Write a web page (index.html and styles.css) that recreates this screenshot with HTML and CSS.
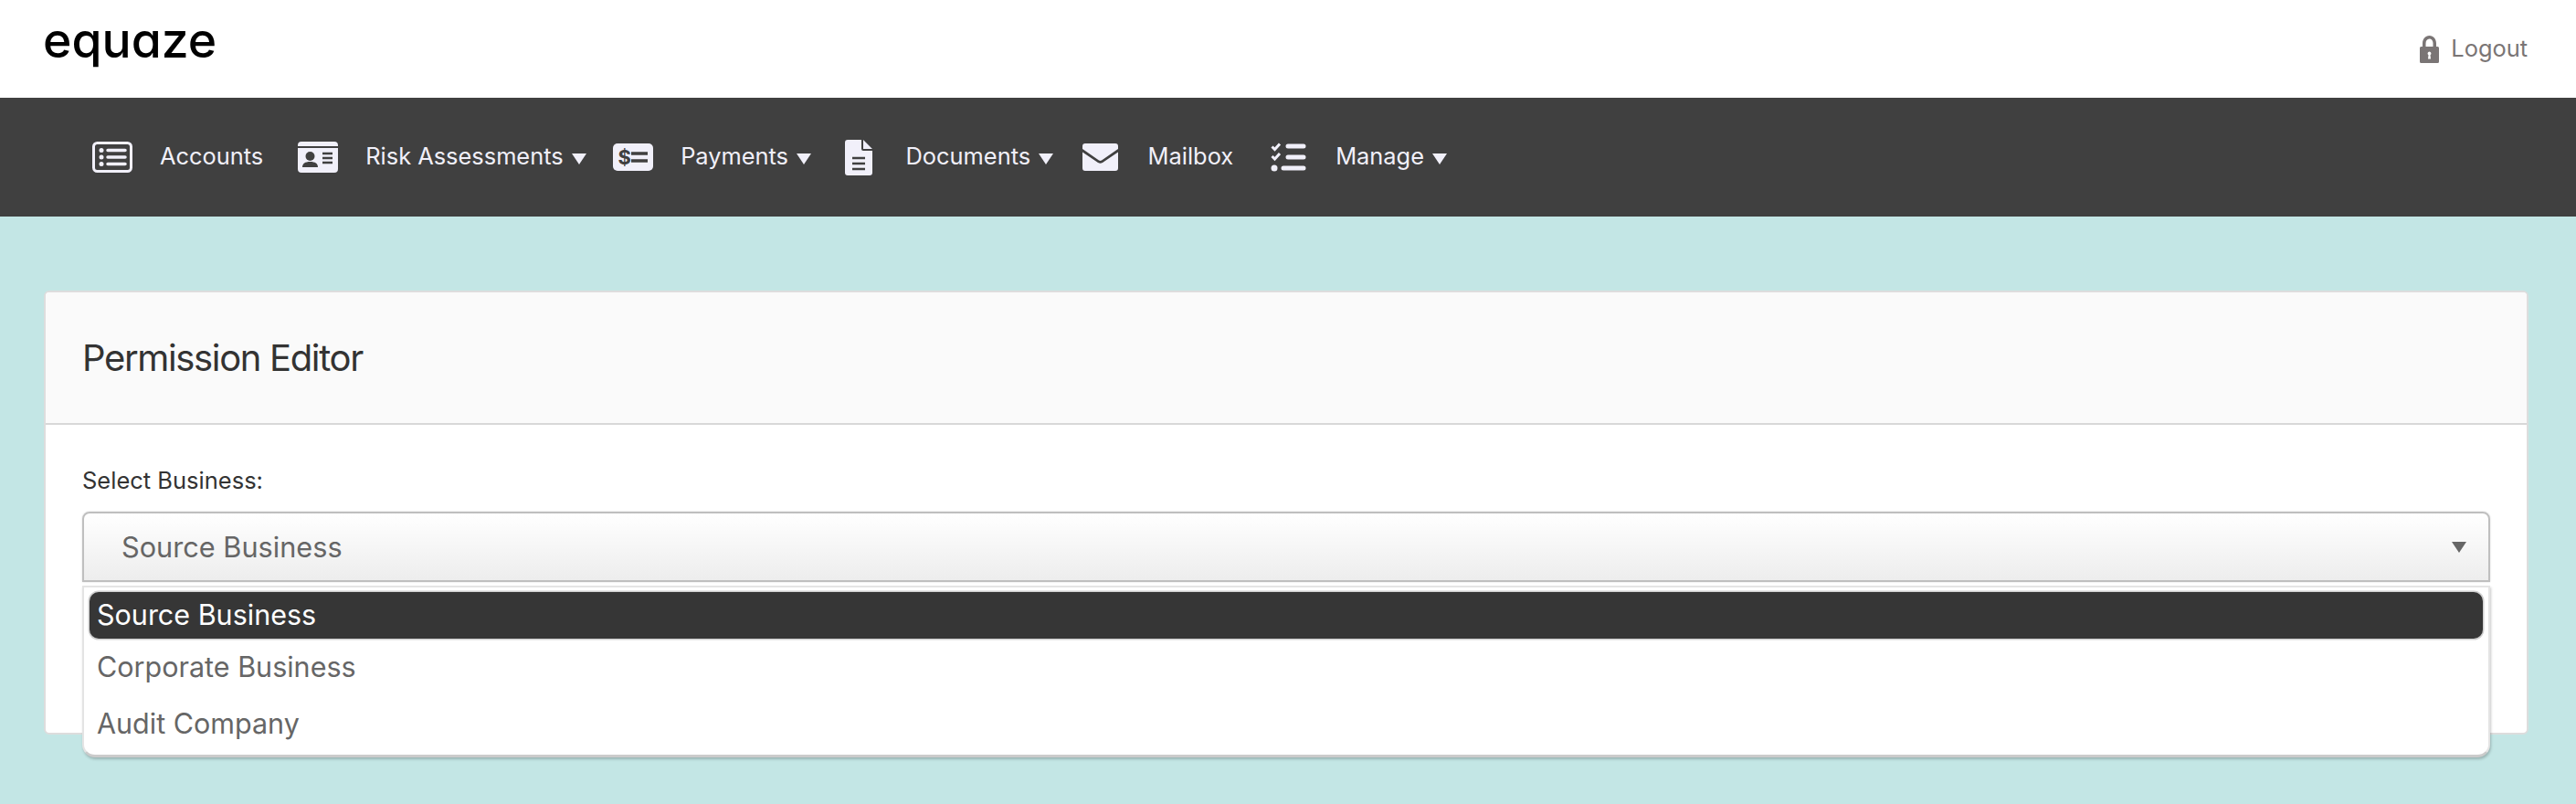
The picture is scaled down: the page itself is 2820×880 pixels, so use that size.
FILE: index.html
```html
<!DOCTYPE html>
<html lang="en">
<head>
<meta charset="utf-8">
<title>Permission Editor</title>
<link rel="stylesheet" href="styles.css">
</head>
<body>
<header class="topbar">
  <div class="logo">equaze</div>
  <a class="logout" href="#">
    <svg class="lock" viewBox="0 0 21 30"><path fill-rule="evenodd" d="M3 12V8.500C3 3.800 6 0 10.500 0S18 3.800 18 8.500V12h1.500A1.500 1.500 0 0 1 21 13.500V28.500A1.500 1.500 0 0 1 19.500 30H1.500A1.500 1.500 0 0 1 0 28.500V13.500A1.500 1.500 0 0 1 1.500 12ZM6.500 12h8V8.500C14.500 5.800 13 3.500 10.500 3.500S6.500 5.800 6.500 8.500ZM10.500 17.500a2 2 0 0 0-1 3.700L9 25.500h3l-.5-4.300a2 2 0 0 0-1-3.700Z"/></svg>
    <span class="logout-text">Logout</span>
  </a>
</header>
<nav class="mainnav">
  <a class="item" href="#">
    <span class="slot"><svg width="44" height="34" viewBox="0 0 44 34"><rect x="1.500" y="1.500" width="41" height="31" rx="4" class="line"/><circle cx="10" cy="9.500" r="2.500" class="fill"/><circle cx="10" cy="17" r="2.500" class="fill"/><circle cx="10" cy="24.500" r="2.500" class="fill"/><path d="M17 9.500h19M17 17h19M17 24.500h19" class="bar"/></svg></span>
    <span class="label">Accounts</span>
  </a>
  <a class="item has-caret" href="#">
    <span class="slot"><svg width="44" height="34" viewBox="0 0 44 34"><path class="fill" d="M4 0h36a4 4 0 0 1 4 4v1H0V4a4 4 0 0 1 4-4ZM0 7h44v23a4 4 0 0 1-4 4H4a4 4 0 0 1-4-4Z"/><circle cx="13.500" cy="16" r="5" class="dark"/><path class="dark" d="M5 28c0-4 3-6 8.500-6S22 24 22 28Z"/><path d="M27 13h11M27 18h11M27 23h11" class="barDark"/></svg></span>
    <span class="label">Risk Assessments</span><span class="caret"></span>
  </a>
  <a class="item has-caret" href="#">
    <span class="slot"><svg width="44" height="30" viewBox="0 0 44 30"><rect width="44" height="30" rx="5" class="fill"/><text x="5.500" y="22.500" class="dollar">$</text><path d="M20 11h18M20 19h18" class="barDark wide"/></svg></span>
    <span class="label">Payments</span><span class="caret"></span>
  </a>
  <a class="item has-caret" href="#">
    <span class="slot"><svg width="30" height="39" viewBox="0 0 30 39"><path class="fill" d="M3 0H18V10a2 2 0 0 0 2 2H30V36a3 3 0 0 1-3 3H3a3 3 0 0 1-3-3V3a3 3 0 0 1 3-3ZM20 0l10 10H20Z"/><path d="M8 20h14M8 26h14M8 32h14" class="barDark"/></svg></span>
    <span class="label">Documents</span><span class="caret"></span>
  </a>
  <a class="item" href="#">
    <span class="slot"><svg width="39" height="30" viewBox="0 0 39 30"><path class="fill" d="M3 0h33a3 3 0 0 1 3 3v3L21 18.500a3 3 0 0 1-3 0L0 6V3a3 3 0 0 1 3-3ZM0 9.500 17 21a4.500 4.500 0 0 0 5 0L39 9.500V27a3 3 0 0 1-3 3H3a3 3 0 0 1-3-3Z"/></svg></span>
    <span class="label">Mailbox</span>
  </a>
  <a class="item has-caret" href="#">
    <span class="slot"><svg width="39" height="32" viewBox="0 0 39 32"><path d="M1.500 4.500 4.500 7.500 10 1.500M1.500 15 4.500 18 10 12" class="check"/><circle cx="4" cy="28" r="3.500" class="fill"/><path d="M19 4h17M19 16h17M14 28h22" class="bar thick"/></svg></span>
    <span class="label">Manage</span><span class="caret"></span>
  </a>
</nav>
<main class="content">
  <section class="card">
    <div class="card-head"><h1>Permission Editor</h1></div>
    <div class="card-body">
      <label class="field-label">Select Business:</label>
      <div class="select-box">
        <span>Source Business</span><span class="select-arrow"></span>
      </div>
      <ul class="options">
        <li class="active">Source Business</li>
        <li>Corporate Business</li>
        <li>Audit Company</li>
      </ul>
    </div>
  </section>
</main>
</body>
</html>
```
FILE: styles.css
```css
* { box-sizing: border-box; }
html, body { margin: 0; height: 100%; }
body {
  background: #c3e6e5;
  font-family: Inter, "Liberation Sans", sans-serif;
  overflow: hidden;
}
a { text-decoration: none; color: inherit; }

.topbar {
  height: 107px;
  background: #fff;
  display: flex;
  justify-content: space-between;
  align-items: flex-start;
  padding: 0 53px 0 47px;
}
.logo {
  font-size: 53.500px;
  line-height: 64px;
  font-weight: 500;
  color: #000;
  font-feature-settings: "cv11";
  margin-top: 12px;
}
.logout {
  display: flex;
  align-items: center;
  gap: 13px;
  margin-top: 39px;
  color: #7a7575;
  font-size: 25.400px;
  height: 30px;
}
.logout-text { padding-bottom: 3px; }
.lock { width: 21px; height: 30px; fill: #7a7575; }

.mainnav {
  height: 130px;
  background: #404040;
  display: flex;
  align-items: center;
  padding-left: 101px;
}
.item {
  display: flex;
  align-items: center;
  color: #f1f0fa;
  font-size: 25.400px;
  margin-right: 38px;
}
.item.has-caret { margin-right: 29.500px; }
.label { padding-bottom: 3px; }
.slot {
  width: 44px;
  height: 40px;
  margin-right: 30px;
  display: flex;
  align-items: center;
  justify-content: center;
  flex: none;
}
.caret {
  width: 0;
  height: 0;
  margin: 3px 0 0 9px;
  border-left: 8px solid transparent;
  border-right: 8px solid transparent;
  border-top: 12px solid #f1f0fa;
}
.line { fill: none; stroke: #f1f0fa; stroke-width: 3; }
.fill { fill: #f1f0fa; }
.dark { fill: #404040; }
.bar { stroke: #f1f0fa; stroke-width: 3.500; stroke-linecap: round; fill: none; }
.bar.thick { stroke-width: 5; }
.barDark { stroke: #404040; stroke-width: 2.500; fill: none; }
.barDark.wide { stroke-width: 3.500; }
.check { stroke: #f1f0fa; stroke-width: 3; fill: none; }
.dollar { fill: #404040; font-size: 22px; font-weight: 700; font-family: Inter, sans-serif; }

.content { padding: 81px 52px 0 48px; }
.card {
  height: 486px;
  background: #fff;
  border: 2px solid #dddddd;
  border-radius: 6px;
}
.card-head {
  height: 145px;
  background: #fafafa;
  border-bottom: 2px solid #d8d8d8;
  padding: 0 40px;
  display: flex;
  align-items: center;
  border-radius: 4px 4px 0 0;
}
h1 {
  margin: 0;
  font-size: 40px;
  font-weight: 400;
  color: #333;
  letter-spacing: -1.350px;
}
.card-body { padding: 46px 40px 0; position: relative; }
.field-label { display: block; font-size: 25.500px; line-height: 30px; color: #333; }
.select-box {
  margin-top: 19px;
  height: 77px;
  border: 2px solid #bfbfbf;
  border-radius: 8px 8px 0 0;
  background: linear-gradient(#ffffff, #ededed);
  display: flex;
  align-items: center;
  justify-content: space-between;
  padding: 0 24px 0 41px;
  font-size: 30.700px;
  color: #666;
  box-shadow: 0 0 2px #d4d4d4;
}
.select-arrow {
  width: 0;
  height: 0;
  border-left: 8px solid transparent;
  border-right: 8px solid transparent;
  border-top: 12px solid #666;
}
.options {
  position: absolute;
  left: 40px;
  right: 40px;
  top: 176px;
  height: 188px;
  margin: 0;
  padding: 5px 6px;
  list-style: none;
  background: #fff;
  border: 2px solid #e4e4e4;
  border-bottom: 3px solid #cbcbcb;
  border-radius: 0 0 14px 14px;
  box-shadow: 1px 2px 3px rgba(0, 0, 0, 0.22);
  font-size: 30.500px;
  color: #666;
}
.options li { padding: 0 8px; height: 61px; line-height: 61px; }
.options li.active {
  height: 51px;
  line-height: 50px;
  background: #363636;
  color: #fff;
  border-radius: 10px;
  box-shadow: 0 0 0 1.500px #d0d0d0;
}
.options li:nth-child(2) { height: 62px; }
```
